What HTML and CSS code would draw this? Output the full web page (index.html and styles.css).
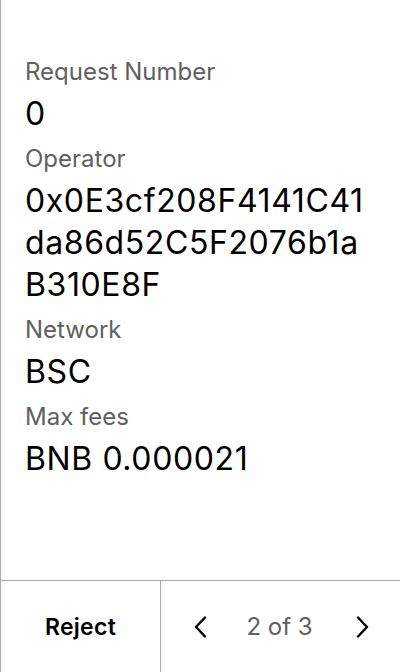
FILE: index.html
```html
<!DOCTYPE html>
<html>
<head>
<meta charset="utf-8">
<link rel="stylesheet" href="styles.css">
</head>
<body>
<div class="screen">
  <div class="content">
    <div class="field">
      <div class="label">Request Number</div>
      <div class="value">0</div>
    </div>
    <div class="field">
      <div class="label">Operator</div>
      <div class="value">0x0E3cf208F4141C41<br>da86d52C5F2076b1a<br>B310E8F</div>
    </div>
    <div class="field">
      <div class="label">Network</div>
      <div class="value">BSC</div>
    </div>
    <div class="field">
      <div class="label">Max fees</div>
      <div class="value">BNB 0.000021</div>
    </div>
  </div>
  <div class="footer">
    <div class="reject">Reject</div>
    <div class="pager">
      <svg class="chev" width="16" height="22" viewBox="0 0 16 22"><polyline points="12,1.5 3,11 12,20.5" fill="none" stroke="#000" stroke-width="2.4" stroke-linecap="round" stroke-linejoin="round"/></svg>
      <span class="count">2 of 3</span>
      <svg class="chev" width="16" height="22" viewBox="0 0 16 22"><polyline points="4,1.5 13,11 4,20.5" fill="none" stroke="#000" stroke-width="2.4" stroke-linecap="round" stroke-linejoin="round"/></svg>
    </div>
  </div>
</div>
</body>
</html>
```
FILE: styles.css
```css
html, body {
  margin: 0;
  padding: 0;
  background: #fff;
}
body {
  font-family: Inter, "Noto Sans", sans-serif;
  color: #000;
}
.screen {
  width: 399px;
  height: 672px;
  border-left: 1px solid #a8a8a8;
  display: flex;
  flex-direction: column;
}
.content {
  height: 580px;
  box-sizing: border-box;
  padding: 57px 0 0 24px;
  display: flex;
  flex-direction: column;
  gap: 9px;
}
.label {
  font-size: 24px;
  line-height: 30px;
  color: #606060;
}
.value {
  font-size: 32px;
  line-height: 42px;
  letter-spacing: 0.6px;
  margin-top: 6px;
  color: #000;
}
.footer {
  flex: 1;
  border-top: 1px solid #a8a8a8;
  display: flex;
}
.reject {
  width: 159px;
  border-right: 1px solid #a8a8a8;
  display: flex;
  align-items: center;
  justify-content: center;
  font-size: 23px;
  font-weight: 600;
  letter-spacing: 0.3px;
}
.pager {
  flex: 1;
  display: flex;
  align-items: center;
  justify-content: space-between;
  padding: 0 30px 0 32px;
}
.count {
  font-size: 24px;
  color: #606060;
  margin-right: 4px;
}
.chev {
  display: block;
}
```
